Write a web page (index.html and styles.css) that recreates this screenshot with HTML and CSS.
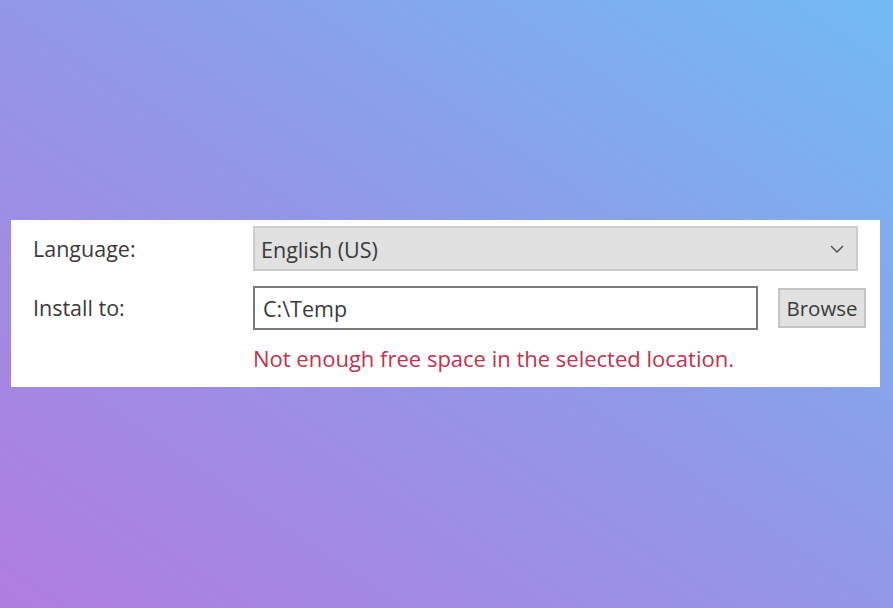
FILE: index.html
```html
<!DOCTYPE html>
<html>
<head>
<meta charset="utf-8">
<link rel="stylesheet" href="styles.css">
</head>
<body>
<div class="stage">
  <div class="panel">
    <div class="label">Language:</div>
    <div class="combo">
      <span class="combo-text">English (US)</span>
      <svg class="chev" width="14" height="8" viewBox="0 0 14 8"><path d="M1 1 L7 7 L13 1" fill="none" stroke="#555" stroke-width="1.5"/></svg>
    </div>
    <div class="label">Install to:</div>
    <div class="path-row">
      <div class="input">C:\Temp</div>
      <div class="btn">Browse</div>
    </div>
    <div class="error">Not enough free space in the selected location.</div>
  </div>
</div>
</body>
</html>
```
FILE: styles.css
```css
html, body { margin: 0; padding: 0; }
body {
  width: 893px;
  height: 608px;
  overflow: hidden;
  font-family: "Open Sans", "Noto Sans", sans-serif;
}
.stage {
  width: 893px;
  height: 608px;
  box-sizing: border-box;
  padding-top: 220px;
  padding-left: 11px;
  background: linear-gradient(to top right, #b07de0 0%, #9397e7 50%, #72bbf2 100%);
}
.panel {
  width: 869px;
  height: 167px;
  box-sizing: border-box;
  background: #fff;
  padding: 6px 14px 0 22px;
  display: grid;
  grid-template-columns: 220px 1fr;
  grid-template-rows: 45px 44px auto;
  row-gap: 15px;
  color: #3a3a3a;
  font-size: 21.5px;
}
.label {
  display: flex;
  align-items: center;
  padding-bottom: 1px;
}
.combo {
  margin-right: 8px;
  box-sizing: border-box;
  background: #e1e1e1;
  border: 2px solid #cccccc;
  display: flex;
  align-items: center;
  justify-content: space-between;
  padding: 0 12px 0 6px;
}
.combo-text { padding-top: 2px; }
.chev { display: block; }
.path-row {
  display: flex;
  align-items: center;
  gap: 20px;
}
.input {
  width: 505px;
  height: 44px;
  box-sizing: border-box;
  border: 2px solid #7a7a7a;
  display: flex;
  align-items: center;
  padding: 0 8px;
}
.btn {
  width: 88px;
  height: 40px;
  box-sizing: border-box;
  background: #e1e1e1;
  border: 2px solid #c4c4c4;
  display: flex;
  align-items: center;
  justify-content: center;
  font-size: 20.5px;
}
.error {
  grid-column: 2;
  color: #c4314b;
  font-size: 22px;
  margin-top: -2px;
}
```
